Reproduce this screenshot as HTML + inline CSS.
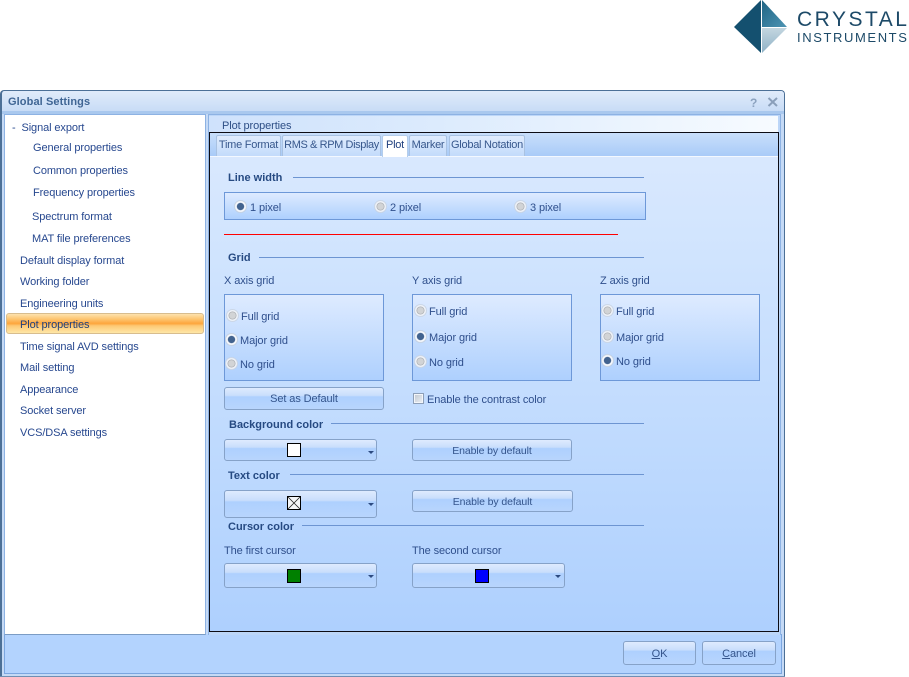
<!DOCTYPE html>
<html><head><meta charset="utf-8">
<style>
html,body{margin:0;padding:0;background:#fff;}
body{width:909px;height:677px;position:relative;overflow:hidden;font-family:"Liberation Sans",sans-serif;font-size:11px;letter-spacing:-.1px;color:#2f4f8c;}
div,span{position:absolute;box-sizing:border-box;}
.t{white-space:nowrap;line-height:14px;margin-top:1px;}
.b{font-weight:bold;color:#264a82;letter-spacing:0;}
.nav{color:#27488f;}
.line{height:1px;background:#6d95d2;}
.grp{border:1px solid #6d98d8;background:linear-gradient(#deebff,#aed0fe);}
.tab{top:135px;height:21px;background:linear-gradient(#e0ecfd,#c3dbfb);border:1px solid #a9c2e2;border-bottom:none;border-radius:2px 2px 0 0;text-align:center;line-height:19px;color:#37578c;white-space:nowrap;overflow:hidden;letter-spacing:-.25px;}
.r{width:13px;height:13px;margin:-1px 0 0 -1px;border-radius:50%;background:radial-gradient(circle,#d2d4d6 0 3px,#a9acb0 3.6px,#f4f7fc 4.4px,#eef3fa 5px,#c3cfe0 6.2px,rgba(195,207,224,0) 6.8px);}
.r.on{background:radial-gradient(circle,#42638f 0 3.3px,#f7f9fd 4px,#f5f8fd 5px,#bccadb 6.2px,rgba(188,202,219,0) 6.8px);}
.btn{border:1px solid #86a2c8;border-radius:3px;background:linear-gradient(#deebfe 0,#c9defc 36%,#aed0fe 42%,#b8d5fd 100%);text-align:center;color:#35558c;}
.sw{width:14px;height:14px;border:1px solid #000;}
.arr{width:0;height:0;border-left:3px solid transparent;border-right:3px solid transparent;border-top:3px solid #2c4a80;}
</style></head><body>

<!-- logo -->
<svg style="position:absolute;left:730px;top:0" width="62" height="56">
<defs><linearGradient id="g1" x1="0" y1="0" x2="1" y2="1"><stop offset="0" stop-color="#1f6484"/><stop offset="1" stop-color="#4d94b3"/></linearGradient>
<linearGradient id="g2" x1="0" y1="0" x2="0" y2="1"><stop offset="0" stop-color="#c3d6e0"/><stop offset="1" stop-color="#8fb2c6"/></linearGradient></defs>
<polygon points="4,27 31,0 31,53" fill="#14506f"/>
<polygon points="32,0 57,27 32,27" fill="url(#g1)"/>
<polygon points="32,28 57,28 32,53" fill="url(#g2)"/>
</svg>
<div class="t" style="left:797px;top:8px;font-size:21px;line-height:22px;letter-spacing:2.5px;color:#1d4a68;">CRYSTAL</div>
<div class="t" style="left:797px;top:30px;font-size:13px;letter-spacing:1.6px;color:#1d4a68;">INSTRUMENTS</div>

<!-- window -->
<div style="left:0;top:90px;width:785px;height:587px;background:#c5daf6;border:1px solid #4c7097;border-left-width:2px;border-bottom:none;border-radius:4px 4px 0 0;"></div>
<div style="left:2px;top:91px;width:782px;height:20px;background:linear-gradient(#e0ebfa,#c8dcf6);border-radius:3px 3px 0 0;"></div>
<div style="left:2px;top:111px;width:782px;height:3px;background:#a9c8ee;"></div>
<div style="left:4px;top:634px;width:778px;height:40px;background:#b3d3fe;border:1px solid #7ba6e0;border-top:none;"></div>
<div class="t" style="left:8px;top:94px;font-weight:bold;letter-spacing:.1px;color:#3f6594;">Global Settings</div>
<div class="t" style="left:750px;top:95px;font-weight:bold;font-size:12px;color:#8ba2bf;">?</div>
<svg style="position:absolute;left:767px;top:97px" width="12" height="10"><path d="M1.5 1 L10 9 M10 1 L1.5 9" stroke="#8a9fba" stroke-width="2"/></svg>

<!-- left panel -->
<div style="left:4px;top:114px;width:202px;height:521px;background:#fff;border:1px solid #8db2e3;border-bottom-color:#7b9cc4;"></div>
<div class="t nav" style="left:12px;top:120px;">-&nbsp;&nbsp;Signal export</div>
<div class="t nav" style="left:33px;top:140px;">General properties</div>
<div class="t nav" style="left:33px;top:163px;">Common properties</div>
<div class="t nav" style="left:33px;top:185px;">Frequency properties</div>
<div class="t nav" style="left:32px;top:209px;">Spectrum format</div>
<div class="t nav" style="left:32px;top:231px;">MAT file preferences</div>
<div class="t nav" style="left:20px;top:253px;">Default display format</div>
<div class="t nav" style="left:20px;top:274px;">Working folder</div>
<div class="t nav" style="left:20px;top:296px;">Engineering units</div>
<div style="left:6px;top:313px;width:198px;height:21px;border:1px solid #d8bd8e;border-radius:3px;background:linear-gradient(#fde2ae 0,#fdc774 25%,#fda53c 50%,#fdc874 62%,#fee7a8 100%);"></div>
<div class="t" style="left:20px;top:317px;color:#21407c;">Plot properties</div>
<div class="t nav" style="left:20px;top:339px;">Time signal AVD settings</div>
<div class="t nav" style="left:20px;top:360px;">Mail setting</div>
<div class="t nav" style="left:20px;top:382px;">Appearance</div>
<div class="t nav" style="left:20px;top:403px;">Socket server</div>
<div class="t nav" style="left:20px;top:425px;">VCS/DSA settings</div>

<!-- right panel -->
<div style="left:208px;top:114px;width:573px;height:521px;background:#bcd6f8;border:1px solid #8db2e3;border-bottom:none;"></div>
<div style="left:209px;top:116px;width:569px;height:17px;background:linear-gradient(90deg,#cfe2fc 0,#dcebfd 40%,#f7fbff 100%);"></div>
<div class="t" style="left:222px;top:118px;color:#2e4f86;">Plot properties</div>
<div style="left:209px;top:132px;width:570px;height:500px;border:1px solid #0c0c14;background:linear-gradient(#dbe9fe 0,#d0e4fe 25%,#aed0fe 100%);"></div>
<div style="left:210px;top:133px;width:568px;height:23px;background:linear-gradient(#c9dffb,#a9cbf8);"></div>
<div style="left:210px;top:156px;width:568px;height:1px;background:#f3f8ff;"></div>

<div class="tab" style="left:216px;width:65px;">Time Format</div>
<div class="tab" style="left:282px;width:99px;letter-spacing:-.4px;">RMS &amp; RPM Display</div>
<div class="tab" style="left:382px;width:26px;height:22px;background:#fff;color:#1f3f7d;border-color:#b5cdea;font-weight:normal;">Plot</div>
<div class="tab" style="left:409px;width:38px;">Marker</div>
<div class="tab" style="left:449px;width:76px;">Global Notation</div>

<!-- line width -->
<div class="t b" style="left:228px;top:170px;">Line width</div>
<div class="line" style="left:293px;top:177px;width:351px;"></div>
<div class="grp" style="left:224px;top:192px;width:422px;height:28px;"></div>
<div class="r on" style="left:235px;top:201px;"></div><div class="t" style="left:250px;top:200px;">1 pixel</div>
<div class="r" style="left:375px;top:201px;"></div><div class="t" style="left:390px;top:200px;">2 pixel</div>
<div class="r" style="left:515px;top:201px;"></div><div class="t" style="left:530px;top:200px;">3 pixel</div>
<div style="left:224px;top:234px;width:394px;height:1px;background:#f00;"></div>

<!-- grid -->
<div class="t b" style="left:228px;top:250px;">Grid</div>
<div class="line" style="left:259px;top:257px;width:385px;"></div>
<div class="t" style="left:224px;top:273px;">X axis grid</div>
<div class="t" style="left:412px;top:273px;">Y axis grid</div>
<div class="t" style="left:600px;top:273px;">Z axis grid</div>

<div class="grp" style="left:224px;top:294px;width:160px;height:87px;"></div>
<div class="r" style="left:227px;top:310px;"></div><div class="t" style="left:241px;top:309px;">Full grid</div>
<div class="r on" style="left:226px;top:334px;"></div><div class="t" style="left:240px;top:333px;">Major grid</div>
<div class="r" style="left:226px;top:358px;"></div><div class="t" style="left:240px;top:357px;">No grid</div>

<div class="grp" style="left:412px;top:294px;width:160px;height:87px;"></div>
<div class="r" style="left:415px;top:305px;"></div><div class="t" style="left:429px;top:304px;">Full grid</div>
<div class="r on" style="left:415px;top:331px;"></div><div class="t" style="left:429px;top:330px;">Major grid</div>
<div class="r" style="left:415px;top:356px;"></div><div class="t" style="left:429px;top:355px;">No grid</div>

<div class="grp" style="left:600px;top:294px;width:160px;height:87px;"></div>
<div class="r" style="left:602px;top:305px;"></div><div class="t" style="left:616px;top:304px;">Full grid</div>
<div class="r" style="left:602px;top:331px;"></div><div class="t" style="left:616px;top:330px;">Major grid</div>
<div class="r on" style="left:602px;top:355px;"></div><div class="t" style="left:616px;top:354px;">No grid</div>

<div class="btn" style="left:224px;top:387px;width:160px;height:23px;line-height:23px;">Set as Default</div>
<div style="left:413px;top:393px;width:11px;height:11px;border:1px solid #8d9fb8;background:linear-gradient(135deg,#bfc6cf,#eef2f7);box-shadow:inset 0 0 0 1px #f3f6fa;"></div>
<div class="t" style="left:427px;top:392px;">Enable the contrast color</div>

<!-- background color -->
<div class="t b" style="left:229px;top:417px;">Background color</div>
<div class="line" style="left:331px;top:423px;width:313px;"></div>
<div class="btn" style="left:224px;top:439px;width:153px;height:22px;"></div>
<div class="sw" style="left:287px;top:443px;background:#fff;"></div>
<div class="arr" style="left:368px;top:451px;"></div>
<div class="btn" style="left:412px;top:439px;width:160px;height:22px;line-height:22px;font-size:10.5px;">Enable by default</div>

<!-- text color -->
<div class="t b" style="left:228px;top:468px;">Text color</div>
<div class="line" style="left:290px;top:474px;width:354px;"></div>
<div class="btn" style="left:224px;top:490px;width:153px;height:28px;"></div>
<svg style="position:absolute;left:287px;top:496px" width="14" height="14"><rect x=".5" y=".5" width="13" height="13" fill="#f4f6f8" stroke="#000"/><path d="M1 1 L13 13 M13 1 L1 13" stroke="#222" stroke-width=".8"/></svg>
<div class="arr" style="left:368px;top:503px;"></div>
<div class="btn" style="left:412px;top:490px;width:161px;height:22px;line-height:22px;font-size:10.5px;">Enable by default</div>

<!-- cursor color -->
<div class="t b" style="left:228px;top:519px;">Cursor color</div>
<div class="line" style="left:302px;top:525px;width:342px;"></div>
<div class="t" style="left:224px;top:543px;">The first cursor</div>
<div class="t" style="left:412px;top:543px;">The second cursor</div>
<div class="btn" style="left:224px;top:563px;width:153px;height:25px;"></div>
<div class="sw" style="left:287px;top:569px;background:#008000;"></div>
<div class="arr" style="left:368px;top:575px;"></div>
<div class="btn" style="left:412px;top:563px;width:153px;height:25px;"></div>
<div class="sw" style="left:475px;top:569px;background:#00f;"></div>
<div class="arr" style="left:555px;top:575px;"></div>

<!-- footer buttons -->
<div class="btn" style="left:623px;top:641px;width:73px;height:24px;line-height:24px;"><u>O</u>K</div>
<div class="btn" style="left:702px;top:641px;width:74px;height:24px;line-height:24px;"><u>C</u>ancel</div>

<div style="left:0;top:676px;width:785px;height:1px;background:#6f8fb3;"></div>
</body></html>
